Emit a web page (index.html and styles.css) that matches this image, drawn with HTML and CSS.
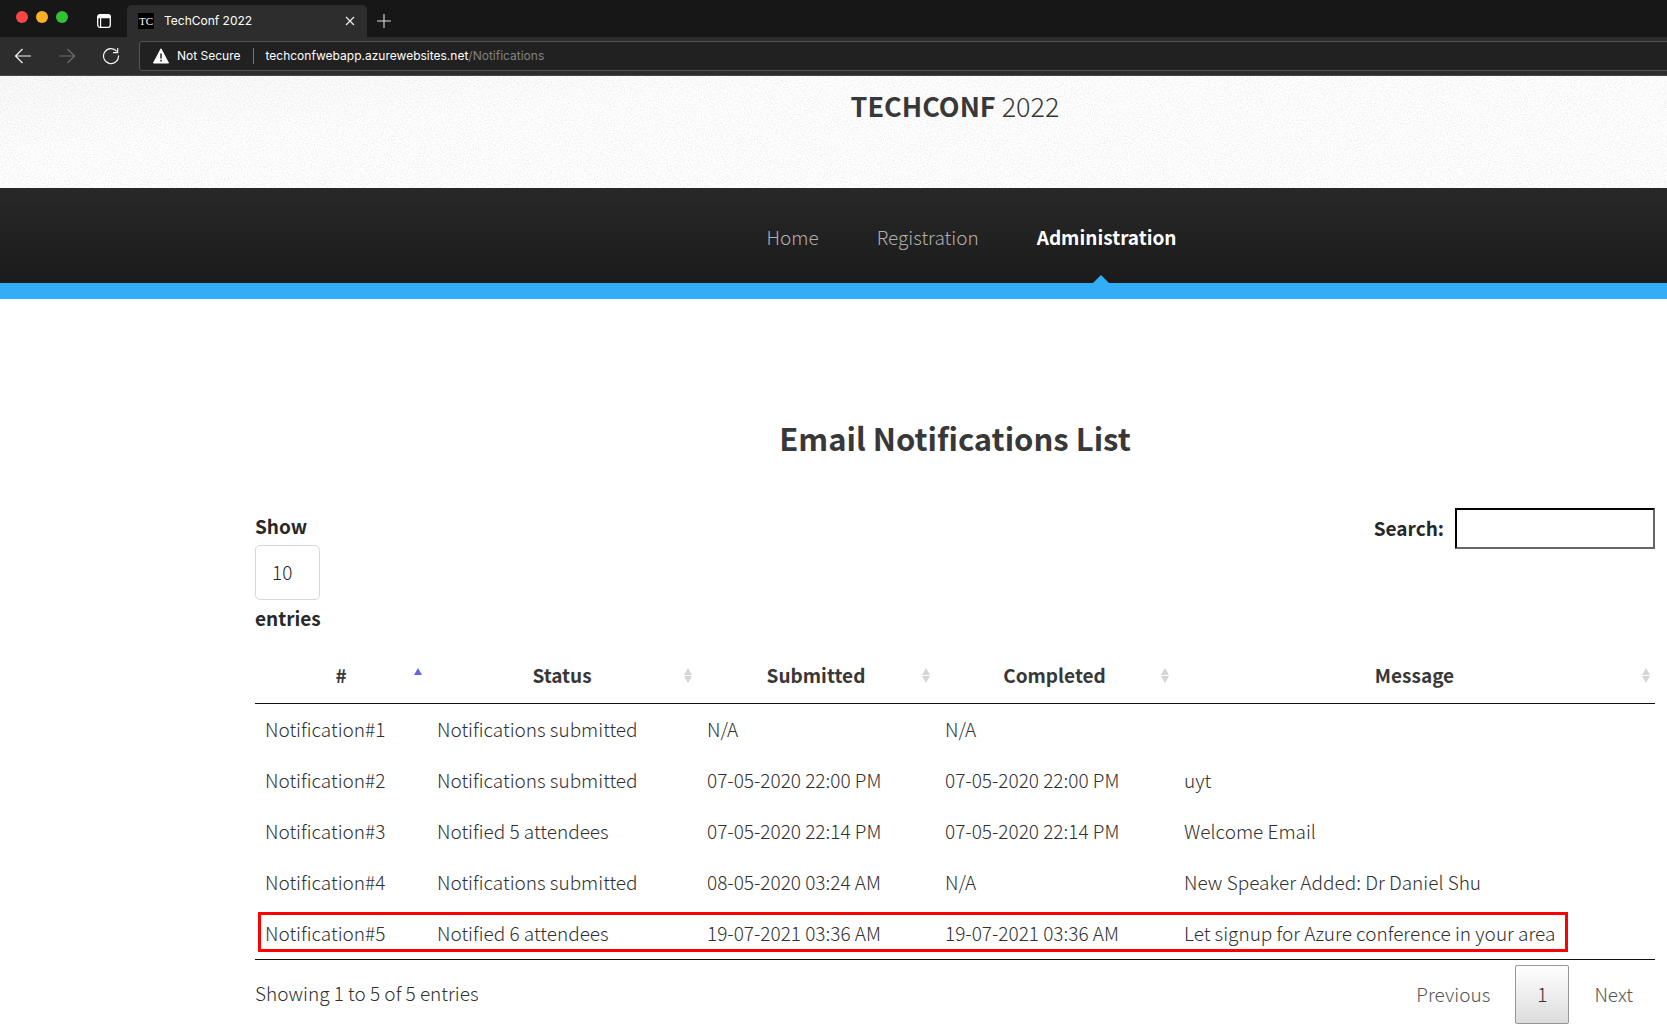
FILE: index.html
```html
<!DOCTYPE html>
<html lang="en">
<head>
<meta charset="utf-8">
<title>TechConf 2022</title>
<link rel="stylesheet" href="styles.css">
</head>
<body>
<div class="browser">
  <div class="tabstrip">
    <div class="lights"><span class="light red"></span><span class="light amber"></span><span class="light green"></span></div>
    <button class="icon-button tab-actions" aria-label="Tab actions">
      <svg width="16" height="16" viewBox="0 0 16 16"><rect x="1.7" y="1.7" width="12.6" height="12.6" rx="2.2" fill="none" stroke="#fff" stroke-width="1.3"/><path d="M1.5 5.2V3.6Q1.5 1.5 3.6 1.5h8.8q2.1 0 2.1 2.1v1.6z" fill="#fff"/><path d="M4.6 5v9" stroke="#fff" stroke-width="1.2"/></svg>
    </button>
    <div class="tab">
      <span class="favicon">TC</span>
      <span class="tab-title">TechConf 2022</span>
      <button class="icon-button" aria-label="Close tab"><svg width="10" height="10" viewBox="0 0 10 10"><path d="M1 1l8 8M9 1l-8 8" stroke="#eee" stroke-width="1.2"/></svg></button>
    </div>
    <button class="icon-button new-tab" aria-label="New tab"><svg width="14" height="14" viewBox="0 0 14 14"><path d="M7 0v14M0 7h14" stroke="#ddd" stroke-width="1.1"/></svg></button>
  </div>
  <div class="toolbar">
    <div class="nav-buttons">
      <button class="icon-button" aria-label="Back"><svg width="18" height="16" viewBox="0 0 18 16"><path d="M17 8H1.5M8.500 1L1.5 8l7 7" fill="none" stroke="#f2f2f2" stroke-width="1.200"/></svg></button>
      <button class="icon-button" aria-label="Forward"><svg width="18" height="16" viewBox="0 0 18 16"><path d="M1 8h15.500M9.500 1l7 7-7 7" fill="none" stroke="#6b6b6b" stroke-width="1.200"/></svg></button>
      <button class="icon-button" aria-label="Reload"><svg width="18" height="18" viewBox="0 0 18 18"><path d="M16.500 8.500A7.500 7.500 0 1 1 14.800 4.300M15.700 1v4.600h-4.700" fill="none" stroke="#f2f2f2" stroke-width="1.200"/></svg></button>
    </div>
    <div class="address">
      <svg width="16" height="16" viewBox="0 0 16 16"><path d="M8 .8L15.500 15H.5z" fill="#fff" stroke="#fff" stroke-linejoin="round"/><path d="M8 5.500v5M8 11.800v1.600" stroke="#222" stroke-width="1.500"/></svg>
      <span class="security">Not Secure</span>
      <span class="url">techconfwebapp.azurewebsites.net<span class="path">/Notifications</span></span>
    </div>
  </div>
</div>

<header class="banner">
  <svg class="grain" aria-hidden="true"><filter id="grain"><feTurbulence type="fractalNoise" baseFrequency="0.7" numOctaves="2"/><feColorMatrix values="0 0 0 0 0  0 0 0 0 0  0 0 0 0 0  0.16 0 0 0 -0.065"/></filter><rect width="100%" height="100%" filter="url(#grain)"/></svg>
  <h1 class="logo"><strong>TECHCONF</strong> 2022</h1>
</header>
<nav class="menu">
  <ul>
    <li><a href="#">Home</a></li>
    <li><a href="#">Registration</a></li>
    <li class="current"><a href="#">Administration</a></li>
  </ul>
</nav>

<main class="content">
  <h2>Email Notifications List</h2>
  <div class="controls">
    <label class="length">Show
      <select><option>10</option><option>25</option><option>50</option></select>
      entries</label>
    <label class="search"><span>Search:</span> <input type="search"></label>
  </div>
  <div class="table-wrap">
    <table>
      <colgroup><col class="c-id"><col class="c-status"><col class="c-date"><col class="c-done"><col></colgroup>
      <thead>
        <tr><th class="asc">#</th><th>Status</th><th>Submitted</th><th>Completed</th><th>Message</th></tr>
      </thead>
      <tbody>
        <tr><td>Notification#1</td><td>Notifications submitted</td><td>N/A</td><td>N/A</td><td></td></tr>
        <tr><td>Notification#2</td><td>Notifications submitted</td><td>07-05-2020 22:00 PM</td><td>07-05-2020 22:00 PM</td><td>uyt</td></tr>
        <tr><td>Notification#3</td><td>Notified 5 attendees</td><td>07-05-2020 22:14 PM</td><td>07-05-2020 22:14 PM</td><td>Welcome Email</td></tr>
        <tr><td>Notification#4</td><td>Notifications submitted</td><td>08-05-2020 03:24 AM</td><td>N/A</td><td>New Speaker Added: Dr Daniel Shu</td></tr>
        <tr><td>Notification#5</td><td>Notified 6 attendees</td><td>19-07-2021 03:36 AM</td><td>19-07-2021 03:36 AM</td><td>Let signup for Azure conference in your area</td></tr>
      </tbody>
    </table>
    <div class="highlight"></div>
  </div>
  <div class="table-footer">
    <span class="info">Showing 1 to 5 of 5 entries</span>
    <div class="pages">
      <button class="page">Previous</button>
      <button class="page active">1</button>
      <button class="page">Next</button>
    </div>
  </div>
</main>
</body>
</html>
```
FILE: styles.css
```css
* { box-sizing: border-box; }
body {
  margin: 0;
  background: #fff;
  color: #303030;
  font: 300 19px/34px "Noto Sans CJK SC", sans-serif;
  overflow-x: hidden;
}
button, input, select { font: inherit; color: inherit; }
button { cursor: pointer; }

/* Browser window */
.browser { background: #2d2d2d; color: #fff; font: 400 12px/16px Inter, sans-serif; border-bottom: 1px solid #4a4648; }
.icon-button { display: flex; padding: 0; border: 0; background: none; }
.tabstrip { display: flex; height: 37px; background: #171717; padding-left: 16px; }
.lights { display: flex; gap: 8px; padding-top: 11px; }
.light { width: 12px; height: 12px; border-radius: 50%; }
.red { background: #fc4545; }
.amber { background: #fdb124; }
.green { background: #2fc232; }
.tab-actions { margin: 13px 15px 0 28px; }
.tab {
  display: flex; align-items: center; width: 240px; margin-top: 5px; padding: 0 12px 0 11px;
  background: #2d2d2d; border-radius: 5px 5px 0 0;
}
.favicon { width: 16px; background: #000; font: 11px/16px "Liberation Serif", serif; text-align: center; }
.tab-title { flex: 1; padding-left: 10px; }
.new-tab { margin: 14px 10px 0; }
.toolbar { display: flex; padding: 4px 0; }
.nav-buttons { display: flex; align-items: center; gap: 26px; padding: 0 19px 0 14px; }
.address {
  display: flex; flex: 1; align-items: center; height: 30px; padding: 0 13px; margin-right: -4px;
  background: #212121; border: 1px solid #555; border-radius: 3px;
}
.security { margin-left: 8px; padding-right: 12px; border-right: 1px solid #777; }
.url { margin-left: 12px; }
.path { color: #818181; }

/* Site header */
.banner { position: relative; height: 112px; padding: 13px 12px 0 255px; text-align: center; background: linear-gradient(175deg, #fafafa, #fff 30%); }
.grain { position: absolute; inset: 0; width: 100%; height: 100%; }
.logo { position: relative; margin: 0; color: #383838; font-size: 27px; font-weight: 300; line-height: 34px; }
.logo strong { font-weight: 700; }
.menu { padding: 0 12px 0 288px; background: linear-gradient(#282828, #1b1b1b); border-bottom: 16px solid #31aef6; }
.menu ul { display: flex; justify-content: center; gap: 58px; margin: 0; padding: 0; list-style: none; }
.menu li { position: relative; padding: 32px 0 29px; }
.menu a { color: #b0b0b0; text-decoration: none; }
.menu .current a { color: #fff; font-weight: 700; }
.current::after {
  content: ""; position: absolute; bottom: 0; left: 50%; margin-left: -14px;
  border: 8px solid transparent; border-top: 0; border-bottom-color: #31aef6;
}

/* Notification list */
.content { padding: 119px 12px 0 255px; }
h2 { margin: 0; color: #383838; font-size: 31px; line-height: 40px; font-weight: 700; text-align: center; }
.controls { display: flex; justify-content: space-between; align-items: flex-start; padding-top: 50px; color: #282828; font-weight: 700; }
.length { display: flex; flex-direction: column; align-items: flex-start; padding-top: 1px; }
select {
  appearance: none; width: 65px; height: 55px; margin: 2px 0 1px; padding: 0 16px 2px;
  background: #fff; border: 1px solid #d8d8d8; border-radius: 5px; font-weight: 300;
}
.search { display: flex; align-items: center; gap: 11px; }
.search span { padding-bottom: 2px; }
.search input { width: 200px; height: 41px; padding: 0 8px; background: #fff; border: 2px inset #6b6b6b; border-color: #111 #666 #666 #111; border-radius: 1px; font-weight: 300; }
.table-wrap { position: relative; padding-top: 13px; }
table { width: 100%; table-layout: fixed; border-collapse: separate; border-spacing: 0; border-bottom: 1px solid #111; }
.c-id { width: 172px; }
.c-status { width: 270px; }
.c-date { width: 238px; }
.c-done { width: 239px; }
th { position: relative; height: 56px; padding: 0 18px 2px; border-bottom: 1px solid #111; color: #383838; font-weight: 700; }
th::before, th::after { content: ""; position: absolute; right: 5px; border: 4px solid transparent; }
th::before { top: 20px; border-top: 0; border-bottom: 7px solid #d4d4d4; }
th::after { top: 28px; border-bottom: 0; border-top: 7px solid #d4d4d4; }
th.asc::before { border-bottom-color: #6868dc; }
th.asc::after { display: none; }
td { height: 51px; padding: 0 10px 2px; white-space: nowrap; }
.highlight { position: absolute; left: 3px; right: 87px; bottom: 8px; height: 40px; border: 3px solid #f00; }
.table-footer { display: flex; justify-content: space-between; align-items: center; padding-top: 5px; }
.info { padding-bottom: 4px; }
.pages { display: flex; gap: 3px; }
.page { height: 59px; padding: 0 21px 2px; background: none; border: 1px solid transparent; border-radius: 2px; color: #555; }
.page.active { color: #333; border-color: #979797; background: linear-gradient(#fff, #dcdcdc); }
```
